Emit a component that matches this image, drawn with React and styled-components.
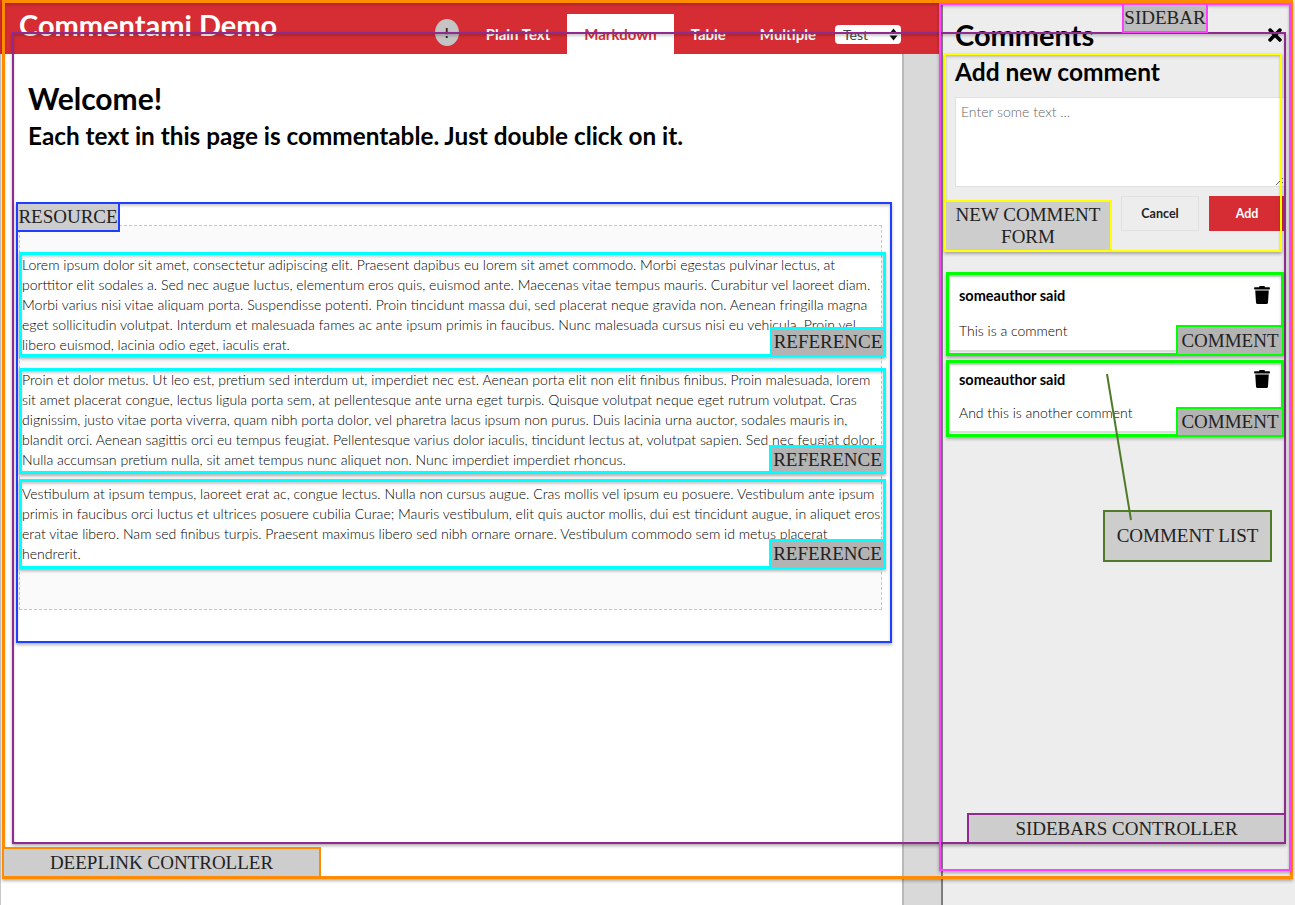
import React from 'react';
import styled, { createGlobalStyle } from 'styled-components';
import { FaTimes, FaTrash } from 'react-icons/fa';

const GlobalStyle = createGlobalStyle`
  html, body {
    margin: 0;
    padding: 0;
    background: #fff;
    overflow: hidden;
  }
  * {
    box-sizing: border-box;
  }
`;

const Page = styled.div`
  position: relative;
  display: flex;
  width: 1295px;
  height: 905px;
  overflow: hidden;
  font-family: Lato, "Open Sans", sans-serif;
  color: #000;
`;

const LeftPane = styled.div`
  display: flex;
  flex-direction: column;
  width: 941px;
`;

const Header = styled.header`
  display: flex;
  align-items: flex-end;
  height: 54px;
  padding-right: 40px;
  background: #d62d34;
`;

const Brand = styled.div`
  align-self: flex-start;
  margin: 6px auto 0 19px;
  color: #fff;
  font-size: 29px;
  line-height: 38px;
  font-weight: 700;
`;

const Notice = styled.div`
  display: flex;
  align-items: center;
  justify-content: center;
  align-self: flex-start;
  width: 24px;
  height: 27px;
  margin: 19px 10px 0 0;
  border-radius: 50%;
  background: #c4c4c4;
  color: #222;
  font-size: 14px;
  font-weight: 700;
`;

const Tab = styled.div`
  display: flex;
  align-items: center;
  justify-content: center;
  height: 40px;
  padding: 0 17px 1px;
  background: ${(props) => (props.$active ? '#fff' : 'transparent')};
  color: ${(props) => (props.$active ? '#d62d34' : '#fff')};
  font-size: 15px;
  font-weight: 700;
`;

const SelectBox = styled.div`
  display: flex;
  align-items: center;
  justify-content: space-between;
  align-self: flex-start;
  width: 66px;
  height: 19px;
  margin: 25px 0 0 2px;
  padding: 0 3px 0 8px;
  border-radius: 4px;
  background: #fff;
  color: #444;
  font-size: 14px;
`;

const Body = styled.div`
  display: flex;
  flex: 1;
`;

const Main = styled.main`
  width: 902px;
  padding-left: 18px;
  border-left: 1px solid #c8c8c8;
  background: #fff;
`;

const Gutter = styled.div`
  width: 39px;
  border-left: 2px solid #b9b9b9;
  background: #d9d9d9;
`;

const Intro = styled.section`
  height: 171px;
  padding: 26px 0 0 9px;
`;

const Welcome = styled.h1`
  margin: 0;
  font-size: 30px;
  line-height: 36px;
  font-weight: 700;
`;

const Subtitle = styled.h2`
  margin: 0;
  font-size: 24.3px;
  line-height: 40px;
  font-weight: 700;
`;

const Resource = styled.section`
  display: flex;
  flex-direction: column;
  gap: 14px;
  width: 863px;
  height: 385px;
  padding-top: 29px;
  border: 1px dashed #c6c6c6;
  background: #fafafa;
`;

const Paragraph = styled.p`
  margin: 0;
  padding: 0 0 0 2px;
  background: #fff;
  color: #000;
  font-size: 14.07px;
  line-height: 20px;
  font-weight: 300;

  &:first-child {
    margin-bottom: 1px;
  }
`;

const Sidebar = styled.aside`
  width: 354px;
  height: 905px;
  padding: 0 10px 0 7px;
  border-left: 2px solid #7d7d7d;
  background: #ededed;
`;

const SidebarHead = styled.div`
  display: flex;
  align-items: center;
  justify-content: space-between;
  height: 53px;
  padding: 16px 0 0 5px;
`;

const SidebarTitle = styled.h2`
  margin: 0;
  font-size: 29px;
  line-height: 36px;
  font-weight: 700;
`;

const Form = styled.form`
  height: 224px;
  padding-left: 5px;
`;

const FormTitle = styled.h3`
  margin: 0;
  font-size: 24.5px;
  line-height: 37px;
  font-weight: 700;
`;

const TextArea = styled.textarea`
  display: block;
  width: 100%;
  height: 90px;
  margin-top: 7px;
  padding: 5px;
  border: 1px solid #e0e0e0;
  border-radius: 0;
  outline: none;
  background: #fff;
  font-family: inherit;
  font-size: 14px;
  font-weight: 300;

  &::placeholder {
    color: #666;
  }
`;

const Actions = styled.div`
  display: flex;
  justify-content: flex-end;
  gap: 10px;
  margin-top: 9px;
`;

const Button = styled.button`
  width: ${(props) => (props.$primary ? '76px' : '78px')};
  height: 35px;
  padding: 0 0 1px;
  border: 1px solid ${(props) => (props.$primary ? '#d62d34' : '#e0e0e0')};
  background: ${(props) => (props.$primary ? '#d62d34' : '#ededed')};
  color: ${(props) => (props.$primary ? '#fff' : '#222')};
  font-family: inherit;
  font-size: 12.5px;
  font-weight: 700;
`;

const CommentList = styled.div`
  display: flex;
  flex-direction: column;
  gap: 13px;
  margin-right: 2px;
`;

const Comment = styled.div`
  height: ${(props) => props.$height}px;
  padding: ${(props) => props.$top}px 12px 0 9px;
  border-bottom: 2px solid #dcdcdc;
  background: #fff;
`;

const CommentHead = styled.div`
  display: flex;
  align-items: center;
  justify-content: space-between;
  height: 18px;
  font-size: 14.5px;
  font-weight: 700;
`;

const CommentText = styled.p`
  margin: ${(props) => props.$gap}px 0 0;
  font-size: 14px;
  line-height: 20px;
  font-weight: 300;
`;

// the diagram notes drawn on top of the screenshot
const Frame = styled.div`
  position: absolute;
  left: ${(props) => props.$x}px;
  top: ${(props) => props.$y}px;
  width: ${(props) => props.$w}px;
  height: ${(props) => props.$h}px;
  border: ${(props) => props.$size || 2}px solid ${(props) => props.$color};
  box-shadow: 0 2px 3px rgba(0, 0, 0, 0.3), inset 0 2px 3px rgba(0, 0, 0, 0.2);
  pointer-events: none;
`;

const Note = styled.div`
  position: absolute;
  left: ${(props) => props.$x}px;
  top: ${(props) => props.$y}px;
  display: flex;
  align-items: center;
  justify-content: center;
  width: ${(props) => props.$w}px;
  height: ${(props) => props.$h}px;
  border: 2px solid ${(props) => props.$color};
  background: ${(props) => props.$fill || '#cdcdcd'};
  color: #222;
  font-family: "Liberation Serif", "Times New Roman", serif;
  font-size: 19px;
  line-height: 22px;
  text-align: center;
`;

const Leader = styled.svg`
  position: absolute;
  left: 0;
  top: 0;
  pointer-events: none;
`;

const ORANGE = '#ff8c00';
const PURPLE = '#8e2a90';
const BLUE = '#1f3fff';
const CYAN = '#00ffff';
const MAGENTA = '#ff40ff';
const YELLOW = '#ffff00';
const GREEN = '#00ff00';
const MOSS = '#4f7a28';
const DARK_FILL = '#b3b3b3';

const paragraphs = [
  'Lorem ipsum dolor sit amet, consectetur adipiscing elit. Praesent dapibus eu lorem sit amet commodo. Morbi egestas pulvinar lectus, at porttitor elit sodales a. Sed nec augue luctus, elementum eros quis, euismod ante. Maecenas vitae tempus mauris. Curabitur vel laoreet diam. Morbi varius nisi vitae aliquam porta. Suspendisse potenti. Proin tincidunt massa dui, sed placerat neque gravida non. Aenean fringilla magna eget sollicitudin volutpat. Interdum et malesuada fames ac ante ipsum primis in faucibus. Nunc malesuada cursus nisi eu vehicula. Proin vel libero euismod, lacinia odio eget, iaculis erat.',
  'Proin et dolor metus. Ut leo est, pretium sed interdum ut, imperdiet nec est. Aenean porta elit non elit finibus finibus. Proin malesuada, lorem sit amet placerat congue, lectus ligula porta sem, at pellentesque ante urna eget turpis. Quisque volutpat neque eget rutrum volutpat. Cras dignissim, justo vitae porta viverra, quam nibh porta dolor, vel pharetra lacus ipsum non purus. Duis lacinia urna auctor, sodales mauris in, blandit orci. Aenean sagittis orci eu tempus feugiat. Pellentesque varius dolor iaculis, tincidunt lectus at, volutpat sapien. Sed nec feugiat dolor. Nulla accumsan pretium nulla, sit amet tempus nunc aliquet non. Nunc imperdiet imperdiet rhoncus.',
  'Vestibulum at ipsum tempus, laoreet erat ac, congue lectus. Nulla non cursus augue. Cras mollis vel ipsum eu posuere. Vestibulum ante ipsum primis in faucibus orci luctus et ultrices posuere cubilia Curae; Mauris vestibulum, elit quis auctor mollis, dui est tincidunt augue, in aliquet eros erat vitae libero. Nam sed finibus turpis. Praesent maximus libero sed nibh ornare ornare. Vestibulum commodo sem id metus placerat hendrerit.',
];

const frames = [
  { x: 2, y: 0, w: 1291, h: 879, color: ORANGE, size: 3 },
  { x: 12, y: 32, w: 1274, h: 812, color: PURPLE },
  { x: 939, y: 3, w: 352, h: 868, color: MAGENTA },
  { x: 944, y: 53, w: 338, h: 199, color: YELLOW },
  { x: 16, y: 202, w: 876, h: 441, color: BLUE },
  { x: 19, y: 252, w: 867, h: 105, color: CYAN, size: 3 },
  { x: 19, y: 368, w: 867, h: 106, color: CYAN, size: 3 },
  { x: 19, y: 479, w: 867, h: 90, color: CYAN, size: 3 },
  { x: 946, y: 272, w: 338, h: 84, color: GREEN, size: 3 },
  { x: 946, y: 360, w: 338, h: 77, color: GREEN, size: 3 },
];

const notes = [
  { text: 'SIDEBAR', x: 1122, y: 3, w: 86, h: 30, color: MAGENTA, fill: '#bdbdbd' },
  { text: 'NEW COMMENT FORM', x: 944, y: 200, w: 168, h: 52, color: YELLOW },
  { text: 'RESOURCE', x: 16, y: 202, w: 104, h: 30, color: BLUE },
  { text: 'REFERENCE', x: 770, y: 327, w: 116, h: 30, color: CYAN, fill: DARK_FILL },
  { text: 'REFERENCE', x: 769, y: 445, w: 117, h: 29, color: CYAN, fill: DARK_FILL },
  { text: 'REFERENCE', x: 769, y: 539, w: 117, h: 30, color: CYAN, fill: DARK_FILL },
  { text: 'COMMENT', x: 1176, y: 325, w: 108, h: 31, color: GREEN, fill: DARK_FILL },
  { text: 'COMMENT', x: 1176, y: 407, w: 108, h: 30, color: GREEN, fill: DARK_FILL },
  { text: 'COMMENT LIST', x: 1103, y: 510, w: 169, h: 52, color: MOSS },
  { text: 'SIDEBARS CONTROLLER', x: 967, y: 813, w: 319, h: 31, color: PURPLE },
  { text: 'DEEPLINK CONTROLLER', x: 2, y: 847, w: 319, h: 31, color: ORANGE },
];

export default function App() {
  return (
    <Page>
      <GlobalStyle />
      <LeftPane>
        <Header>
          <Brand>Commentami Demo</Brand>
          <Notice>!</Notice>
          <Tab>Plain Text</Tab>
          <Tab $active>Markdown</Tab>
          <Tab>Table</Tab>
          <Tab>Multiple</Tab>
          <SelectBox>
            Test
            <svg width="9" height="13" viewBox="0 0 9 13">
              <path d="M4.5 0.5 8.5 5.5H0.5Z M4.5 12.5 0.5 7.5H8.5Z" fill="#111" />
            </svg>
          </SelectBox>
        </Header>
        <Body>
          <Main>
            <Intro>
              <Welcome>Welcome!</Welcome>
              <Subtitle>Each text in this page is commentable. Just double click on it.</Subtitle>
            </Intro>
            <Resource>
              {paragraphs.map((text, index) => (
                <Paragraph key={index}>{text}</Paragraph>
              ))}
            </Resource>
          </Main>
          <Gutter />
        </Body>
      </LeftPane>
      <Sidebar>
        <SidebarHead>
          <SidebarTitle>Comments</SidebarTitle>
          <FaTimes size={20} />
        </SidebarHead>
        <Form>
          <FormTitle>Add new comment</FormTitle>
          <TextArea placeholder="Enter some text ..." />
          <Actions>
            <Button type="button">Cancel</Button>
            <Button type="button" $primary>Add</Button>
          </Actions>
        </Form>
        <CommentList>
          <Comment $height={75} $top={9}>
            <CommentHead>someauthor said<FaTrash size={18} /></CommentHead>
            <CommentText $gap={17}>This is a comment</CommentText>
          </Comment>
          <Comment $height={68} $top={5}>
            <CommentHead>someauthor said<FaTrash size={18} /></CommentHead>
            <CommentText $gap={15}>And this is another comment</CommentText>
          </Comment>
        </CommentList>
      </Sidebar>

      {frames.map((frame, index) => (
        <Frame key={index} $x={frame.x} $y={frame.y} $w={frame.w} $h={frame.h} $color={frame.color} $size={frame.size} />
      ))}
      {notes.map((note, index) => (
        <Note key={index} $x={note.x} $y={note.y} $w={note.w} $h={note.h} $color={note.color} $fill={note.fill}>
          {note.text}
        </Note>
      ))}
      <Leader width="1295" height="905" viewBox="0 0 1295 905">
        <line x1="1107" y1="374" x2="1131" y2="520" stroke={MOSS} strokeWidth="2" />
      </Leader>
    </Page>
  );
}
